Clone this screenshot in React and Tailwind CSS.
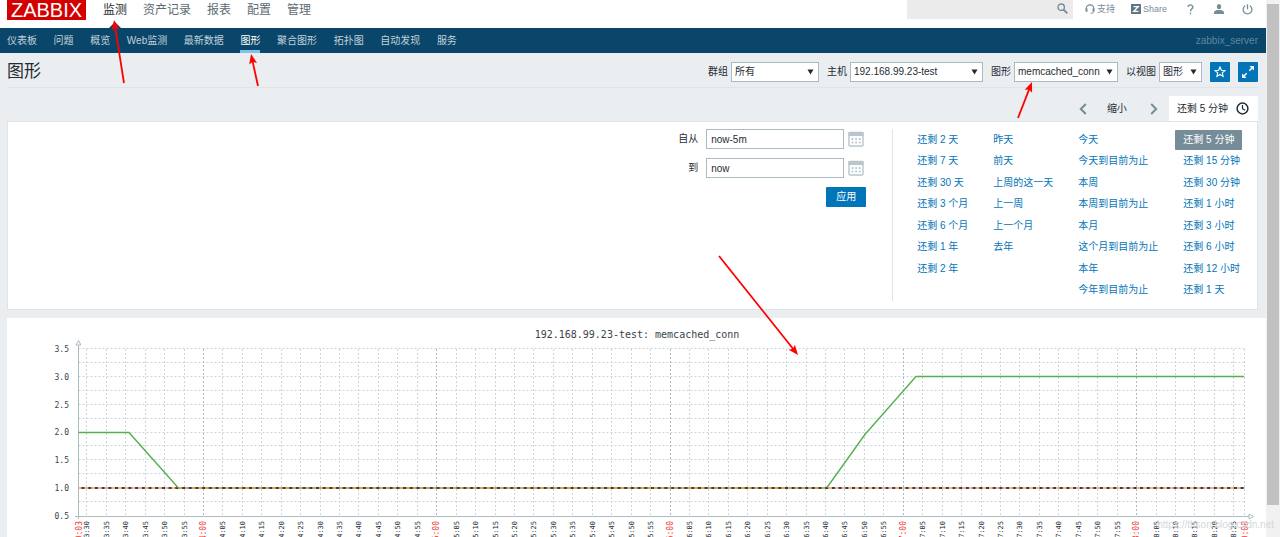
import React, { useState } from 'react';

const MAIN_MENU = ['监测', '资产记录', '报表', '配置', '管理'];
const SUB_MENU = ['仪表板', '问题', '概览', 'Web监测', '最新数据', '图形', '聚合图形', '拓扑图', '自动发现', '服务'];

// Quick ranges, one array per column
const RANGES = [
  ['还剩 2 天', '还剩 7 天', '还剩 30 天', '还剩 3 个月', '还剩 6 个月', '还剩 1 年', '还剩 2 年'],
  ['昨天', '前天', '上周的这一天', '上一周', '上一个月', '去年'],
  ['今天', '今天到目前为止', '本周', '本周到目前为止', '本月', '这个月到目前为止', '本年', '今年到目前为止'],
  ['还剩 5 分钟', '还剩 15 分钟', '还剩 30 分钟', '还剩 1 小时', '还剩 3 小时', '还剩 6 小时', '还剩 12 小时', '还剩 1 天'],
];

function Dropdown({ id, label, options, className }) {
  return (
    <div className="flex items-center gap-[3px]">
      <label htmlFor={id}>{label}</label>
      <div className={'relative h-5 ' + className}>
        <select id={id} className="h-full w-full appearance-none border border-[#acbbc2] bg-white pl-[3px] pr-4 text-[#1f2c33] outline-none">
          {options.map(o => <option key={o}>{o}</option>)}
        </select>
        <svg className="pointer-events-none absolute right-[5px] top-[7px]" width="7" height="6" viewBox="0 0 7 6">
          <path d="M0.5 0.5h6L3.5 5.5z" fill="#1f2c33" />
        </svg>
      </div>
    </div>
  );
}

function CalendarIcon() {
  return (
    <svg width="16" height="16" viewBox="0 0 16 16">
      <rect x="1" y="1.5" width="14" height="13.5" rx="1" fill="#fff" stroke="#b9c5cb" strokeWidth="1.4" />
      <path d="M0.5 1h15v4h-15z" fill="#b9c5cb" />
      {[7.2, 10.6].map(y => [3.6, 7.2, 10.8].map(x => (
        <rect key={x + '-' + y} x={x} y={y} width="1.8" height="1.8" fill="#b9c5cb" />
      )))}
    </svg>
  );
}

function Header() {
  return (
    <header className="flex h-7 items-start bg-white pl-[7px] pr-[13px] text-[#768d99]">
      <a href="#home" className="flex h-5 w-[79px] items-center justify-center bg-[#d40000] font-['Liberation_Sans'] text-[20px] leading-5 text-white">ZABBIX</a>
      <nav className="ml-[17px] flex gap-4 text-[12px] leading-5">
        {MAIN_MENU.map((item, i) => (
          <a key={item} href="#menu" className={i === 0 ? 'relative h-7 text-[#1f2c33]' : 'text-[#5d6b73]'}>
            {item}
            {i === 0 && (
              <svg className="absolute bottom-0 left-[6px]" width="12" height="6" viewBox="0 0 12 6">
                <path d="M0 6L6 0l6 6z" fill="#0a466a" />
              </svg>
            )}
          </a>
        ))}
      </nav>
      <div className="ml-auto flex items-start text-[9px] leading-[18px]">
        <div className="relative h-[19px] w-[166px] bg-[#ebebeb]">
          <input aria-label="search" className="h-full w-full bg-transparent pl-2 pr-6 outline-none" />
          <svg className="absolute right-[5px] top-[3px]" width="11" height="11" viewBox="0 0 11 11" fill="none" stroke="#768d99">
            <circle cx="4.2" cy="4.2" r="3.2" strokeWidth="1.4" />
            <path d="M6.6 6.6L10.3 10.3" strokeWidth="1.9" />
          </svg>
        </div>
        <a href="#support" className="ml-3 flex h-[18px] items-center gap-[2px]">
          <svg width="10" height="10" viewBox="0 0 10 10" fill="none" stroke="#768d99">
            <path d="M1.2 5.5V4.6a3.8 3.8 0 0 1 7.6 0v0.9" strokeWidth="1.2" />
            <path d="M1.5 4.6v3.2M8.5 4.6v3.2" strokeWidth="2" />
            <path d="M8.6 7.5c0 1.4-1 1.8-3 1.8" strokeWidth="1" />
          </svg>
          支持
        </a>
        <a href="#share" className="ml-4 flex h-[18px] items-center gap-[2px]">
          <svg width="10" height="10" viewBox="0 0 10 10">
            <rect width="10" height="10" fill="#5f7885" />
            <path d="M2.6 2.6h4.6L2.8 7.4h4.6" fill="none" stroke="#fff" strokeWidth="1.4" />
          </svg>
          Share
        </a>
        <a href="#help" aria-label="help" className="ml-5 flex h-[18px] items-center">
          <svg width="7" height="11" viewBox="0 0 7 11" fill="none" stroke="#768d99" strokeWidth="1.4">
            <path d="M1 3a2.4 2.2 0 1 1 4 1.7C3.9 5.4 3.5 5.8 3.5 7.4M3.5 8.7v1.6" />
          </svg>
        </a>
        <a href="#profile" aria-label="profile" className="ml-5 flex h-[18px] items-center">
          <svg width="10" height="10" viewBox="0 0 10 10" fill="#768d99">
            <ellipse cx="5" cy="2.7" rx="2.2" ry="2.6" />
            <path d="M0 10V8.4C0 7 1.8 6.3 3.4 6h3.2C8.2 6.3 10 7 10 8.4V10z" />
          </svg>
        </a>
        <a href="#logout" aria-label="logout" className="ml-[18px] flex h-[18px] items-center">
          <svg width="11" height="11" viewBox="0 0 11 11" fill="none" stroke="#768d99" strokeWidth="1.3">
            <path d="M3.2 1.8a4.4 4.4 0 1 0 4.6 0M5.5 0.2v5" />
          </svg>
        </a>
      </div>
    </header>
  );
}

function SubNav() {
  return (
    <nav className="flex h-[25px] items-stretch justify-between bg-[#0a466a] pl-[7px] pr-2 leading-[25px]">
      <div className="flex w-[450px] justify-between text-[#c2d1da]">
        {SUB_MENU.map(item => (
          <a key={item} href="#sub" className={item === '图形' ? 'border-b-[3px] border-[#7cc3f0] text-white' : ''}>{item}</a>
        ))}
      </div>
      <span className="text-[#5d86a0]">zabbix_server</span>
    </nav>
  );
}

function TitleBar() {
  return (
    <div className="ml-[7px] mr-2 flex h-[35px] items-center justify-between border-b border-[#dfe4e7] pt-[3px] text-[#1f2c33]">
      <h1 className="text-[17px] leading-5">图形</h1>
      <div className="flex items-center gap-2">
        <Dropdown id="group" label="群组" options={['所有']} className="w-[88px]" />
        <Dropdown id="host" label="主机" options={['192.168.99.23-test']} className="w-[133px]" />
        <Dropdown id="graph" label="图形" options={['memcached_conn']} className="w-[104px]" />
        <Dropdown id="view" label="以视图" options={['图形']} className="w-[43px]" />
        <button type="button" aria-label="favourite" className="flex size-5 items-center justify-center rounded-[1px] bg-[#0275b8]">
          <svg width="12" height="12" viewBox="0 0 12 12" fill="none" stroke="#fff" strokeWidth="1.1">
            <path d="M6 1l1.4 3.3 3.6 0.3-2.7 2.3 0.8 3.5L6 8.5l-3.1 1.9 0.8-3.5L1 4.6l3.6-0.3z" />
          </svg>
        </button>
        <button type="button" aria-label="fullscreen" className="flex size-5 items-center justify-center rounded-[1px] bg-[#0275b8]">
          <svg width="12" height="12" viewBox="0 0 12 12">
            <path d="M7.4 0H12v4.6zM4.6 12H0V7.4z" fill="#fff" />
            <path d="M10.5 1.5L7.3 4.7M1.5 10.5l3.2-3.2" stroke="#fff" strokeWidth="1.5" />
          </svg>
        </button>
      </div>
    </div>
  );
}

function TimeFilter() {
  const [from, setFrom] = useState('now-5m');
  const [to, setTo] = useState('now');
  const [range, setRange] = useState('还剩 5 分钟');

  return (
    <section className="ml-[7px] mr-2 pt-2 text-[#1f2c33]">
      <div className="flex h-[25px] items-stretch justify-end">
        <button type="button" aria-label="previous" className="px-2">
          <svg width="8" height="12" viewBox="0 0 8 12" fill="none" stroke="#768d99" strokeWidth="2"><path d="M6.8 1L1.8 6l5 5" /></svg>
        </button>
        <button type="button" className="px-3">缩小</button>
        <button type="button" aria-label="next" className="px-[11px]">
          <svg width="8" height="12" viewBox="0 0 8 12" fill="none" stroke="#768d99" strokeWidth="2"><path d="M1.2 1l5 5-5 5" /></svg>
        </button>
        <a href="#time" className="flex items-center gap-2 bg-white pl-2 pr-[9px]">
          {range}
          <svg width="13" height="13" viewBox="0 0 13 13" fill="none" stroke="#1f2c33" strokeWidth="1.5">
            <circle cx="6.5" cy="6.5" r="5.4" />
            <path d="M6.5 3v3.7l2.6 1.6" strokeWidth="1.2" />
          </svg>
        </a>
      </div>
      <div className="flex justify-end border border-[#dfe4e7] bg-white pb-2 pl-2 pr-[9px] pt-[7px]">
        <form className="mr-[22px] grid auto-rows-[20px] grid-cols-[20px_138px_18px] content-start items-center gap-x-2 gap-y-[9px]" onSubmit={e => e.preventDefault()}>
          <label htmlFor="from" className="text-right">自从</label>
          <input id="from" value={from} onChange={e => setFrom(e.target.value)} className="h-5 border border-[#acbbc2] px-1 outline-none" />
          <button type="button" aria-label="from calendar" className="-ml-1"><CalendarIcon /></button>
          <label htmlFor="to" className="text-right">到</label>
          <input id="to" value={to} onChange={e => setTo(e.target.value)} className="h-5 border border-[#acbbc2] px-1 outline-none" />
          <button type="button" aria-label="to calendar" className="-ml-1"><CalendarIcon /></button>
          <button type="submit" className="col-span-3 mr-1 h-5 w-10 justify-self-end rounded-[1px] bg-[#0275b8] text-white">应用</button>
        </form>
        <div className="grid h-[172px] grid-flow-col grid-rows-8 items-center justify-items-start gap-x-[9px] border-l border-[#dfe4e7] pl-4">
          {RANGES.map((column, c) => column.map((r, i) => (
            <button
              key={r}
              type="button"
              onClick={() => setRange(r)}
              style={{ gridColumn: c + 1, gridRow: i + 1 }}
              className={r === range ? 'h-5 rounded-[1px] bg-[#768d99] px-2 text-white' : 'h-5 px-2 text-[#0275b8]'}
            >
              {r}
            </button>
          )))}
        </div>
      </div>
    </section>
  );
}

// Chart geometry
const LEFT = 71.5;
const RIGHT = 1237.5;
const TOP = 31;
const BOTTOM = 198;
const TICKS = Array.from({ length: 60 }, (_, i) => {
  const sec = 210 + i * 5;
  const mm = String(Math.floor(sec / 60)).padStart(2, '0');
  const ss = String(sec % 60).padStart(2, '0');
  return { x: Math.round(79.3 + i * 19.44), label: mm + ':' + ss, major: sec % 60 === 0 };
});

function TimeLabel({ x, children, major }) {
  return (
    <text
      transform={'translate(' + (x + 3) + ' 203) rotate(-90)'}
      textAnchor="end"
      fontSize={major ? 8 : 7}
      fill={major ? '#f0302d' : '#1f2c33'}
    >
      {children}
    </text>
  );
}

function Chart() {
  const rows = Array.from({ length: 12 }, (_, i) => Math.round(TOP + i * (BOTTOM - TOP) / 12) - 0.5);
  return (
    <section className="ml-[7px] mt-2 bg-white">
      <svg width="1259" height="240" viewBox="0 0 1259 240" className="font-['DejaVu_Sans_Mono']" fill="#36444c">
        <text x="630" y="20" fontSize="10" textAnchor="middle">192.168.99.23-test: memcached_conn</text>
        <g stroke="#ccd5d9" strokeDasharray="2 2">
          {rows.map(y => <path key={y} d={`M${LEFT} ${y}H${RIGHT}`} />)}
          {TICKS.map(t => (
            <path key={t.x} d={`M${t.x + 0.5} ${TOP}V${BOTTOM}`} stroke={t.major ? '#acbbc2' : '#ccd5d9'} />
          ))}
          <path d={`M${RIGHT} ${TOP}V${BOTTOM}`} />
        </g>
        <g stroke="#acbbc2" fill="none">
          <path d={`M${LEFT} 27V201M68 198.5H1242`} />
          <path d="M69 27h5L71.5 22.5zM1242 196v5l4.5-2.5z" fill="#fff" />
        </g>
        <path d={`M${LEFT} 170H${RIGHT}`} stroke="#ffb283" strokeWidth="2" />
        <path d="M171 170H820" stroke="#d9a552" strokeWidth="2" />
        <path d={`M${LEFT + 3} 170H${RIGHT}`} stroke="#33424a" strokeWidth="2" strokeDasharray="3 3.7" />
        <path d={`M${LEFT} 114.5H122L171 169.5M820 169.5L859 115l2-2L909 58.5H1237`} fill="none" stroke="#55b04f" strokeWidth="1.4" />
        {['3.5', '3.0', '2.5', '2.0', '1.5', '1.0', '0.5'].map((v, i) => (
          <text key={v} x="62" y={Math.round(34 + i * 27.8)} fontSize="8" textAnchor="end">{v}</text>
        ))}
        <TimeLabel x={LEFT} major>10:03</TimeLabel>
        {TICKS.map(t => <TimeLabel key={t.x} x={t.x} major={t.major}>{t.label}</TimeLabel>)}
        <TimeLabel x={RIGHT} major>10:08</TimeLabel>
      </svg>
    </section>
  );
}

// Hand-drawn red pointers lying over the page
const ARROWS = [
  [124, 83, 114, 20],
  [258, 86, 251, 54],
  [1018, 118, 1032, 82],
  [719, 256, 798, 355],
];

function Arrows() {
  return (
    <svg className="pointer-events-none absolute left-0 top-0" width="1280" height="537" viewBox="0 0 1280 537">
      {ARROWS.map(([x1, y1, x2, y2]) => {
        const angle = Math.atan2(y2 - y1, x2 - x1) * 180 / Math.PI;
        const length = Math.hypot(x2 - x1, y2 - y1);
        return (
          <g key={x1} transform={`translate(${x2} ${y2}) rotate(${angle})`}>
            <path d={`M${-length} 0H-6`} stroke="#f00" strokeWidth="1.8" />
            <path d="M0 0L-10 -4L-8 0L-10 4z" fill="#f00" />
          </g>
        );
      })}
    </svg>
  );
}

export default function App() {
  return (
    <div className="relative flex h-screen overflow-hidden bg-[#ebeef0] font-['Liberation_Sans','Noto_Sans_CJK_SC',sans-serif] text-[10px] leading-[14px]">
      <main className="min-w-0 flex-1 overflow-hidden">
        <Header />
        <SubNav />
        <TitleBar />
        <TimeFilter />
        <Chart />
      </main>
      <div className="w-[14px] bg-[#f1f1f1] px-px pt-1">
        <div className="h-[94%] bg-[#c1c1c1]" />
      </div>
      <Arrows />
      <span className="absolute bottom-[5px] right-[6px] text-[#d5d9db]">https://thson.blog.csdn.net</span>
    </div>
  );
}
